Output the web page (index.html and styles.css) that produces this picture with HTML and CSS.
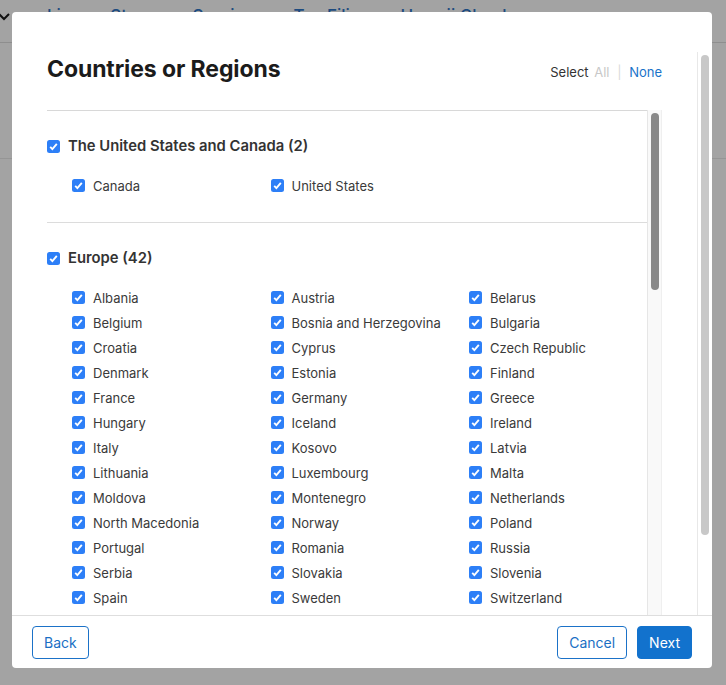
FILE: index.html
```html
<!DOCTYPE html>
<html lang="en">
<head>
<meta charset="utf-8">
<title>Countries or Regions</title>
<link rel="stylesheet" href="styles.css">
</head>
<body>
<div class="page">
  <div class="topbar">
    <svg class="chev" width="12" height="10" viewBox="0 0 12 10"><path d="M0 3 L5 8 L10 3" fill="none" stroke="#111" stroke-width="2"/></svg>
    <nav class="nav">
      <span>Live</span><span>Stores</span><span>Services</span><span>Tax Filing</span><span>Hawaii Check</span>
    </nav>
  </div>
  <div class="band"></div>
</div>

<div class="modal">
  <div class="modal-main">
    <div class="content">
      <div class="head">
        <h1 class="title">Countries or Regions</h1>
        <div class="select">Select <span class="all">All</span> <span class="sep">|</span> <a class="none">None</a></div>
      </div>
      <div class="listwrap">
        <div class="list">
          <section class="section">
            <div class="group"><svg class="cb" viewBox="0 0 13 13"><rect width="13" height="13" rx="2.5" fill="#2d7ff7"/><path d="M3.2 6.9 L5.4 9.1 L9.8 3.9" fill="none" stroke="#fff" stroke-width="1.9"/></svg>The United States and Canada (2)</div>
            <div class="items">
              <div class="item"><svg class="cb" viewBox="0 0 13 13"><rect width="13" height="13" rx="2.5" fill="#2d7ff7"/><path d="M3.2 6.9 L5.4 9.1 L9.8 3.9" fill="none" stroke="#fff" stroke-width="1.9"/></svg>Canada</div>
              <div class="item"><svg class="cb" viewBox="0 0 13 13"><rect width="13" height="13" rx="2.5" fill="#2d7ff7"/><path d="M3.2 6.9 L5.4 9.1 L9.8 3.9" fill="none" stroke="#fff" stroke-width="1.9"/></svg>United States</div>
            </div>
          </section>
          <section class="section">
            <div class="group"><svg class="cb" viewBox="0 0 13 13"><rect width="13" height="13" rx="2.5" fill="#2d7ff7"/><path d="M3.2 6.9 L5.4 9.1 L9.8 3.9" fill="none" stroke="#fff" stroke-width="1.9"/></svg>Europe (42)</div>
            <div class="items" id="europe"></div>
          </section>
        </div>
        <div class="track"><div class="thumb"></div></div>
      </div>
    </div>
    <div class="outer"><div class="outer-track"><div class="outer-thumb"></div></div></div>
  </div>
  <div class="footer">
    <button class="btn">Back</button>
    <div class="actions">
      <button class="btn">Cancel</button>
      <button class="btn primary">Next</button>
    </div>
  </div>
</div>
<script src="app.js"></script>
</body>
</html>
```
FILE: app.js
```js
const names = ["Albania","Austria","Belarus","Belgium","Bosnia and Herzegovina","Bulgaria","Croatia","Cyprus","Czech Republic","Denmark","Estonia","Finland","France","Germany","Greece","Hungary","Iceland","Ireland","Italy","Kosovo","Latvia","Lithuania","Luxembourg","Malta","Moldova","Montenegro","Netherlands","North Macedonia","Norway","Poland","Portugal","Romania","Russia","Serbia","Slovakia","Slovenia","Spain","Sweden","Switzerland"];
const box = '<svg class="cb" viewBox="0 0 13 13"><rect width="13" height="13" rx="2.5" fill="#2d7ff7"/><path d="M3.2 6.9 L5.4 9.1 L9.8 3.9" fill="none" stroke="#fff" stroke-width="1.9"/></svg>';
document.getElementById("europe").innerHTML = names.map(n => '<div class="item">' + box + n + '</div>').join("");
```
FILE: styles.css
```css
* { box-sizing: border-box; }
html, body { margin: 0; }
body {
  width: 726px;
  height: 685px;
  overflow: hidden;
  position: relative;
  background: #a3a3a3;
  font-family: Inter, "Liberation Sans", sans-serif;
}
.topbar {
  height: 43px;
  border-bottom: 1px solid #8e8e8e;
  display: flex;
  align-items: flex-start;
  padding-top: 6px;
}
.chev { margin-top: 5px; margin-left: -1px; }
.nav {
  display: flex;
  gap: 30px;
  margin-left: 36px;
  font-size: 17px;
  font-weight: 500;
  color: #1d4b7f;
}
.band {
  height: 116px;
  border-bottom: 1px solid #959595;
}
.modal {
  position: absolute;
  left: 12px;
  top: 12px;
  width: 700px;
  height: 656px;
  background: #fff;
  border-radius: 4px;
  display: flex;
  flex-direction: column;
  overflow: hidden;
}
.modal-main {
  flex: 1;
  display: flex;
  min-height: 0;
}
.content {
  flex: 1;
  min-width: 0;
  padding: 0 35px;
  display: flex;
  flex-direction: column;
}
.head {
  height: 98px;
  padding-top: 43px;
  display: flex;
  justify-content: space-between;
  align-items: flex-start;
}
.title {
  margin: 0;
  font-size: 23px;
  line-height: 28px;
  font-weight: 700;
  color: #1b1b1b;
  letter-spacing: -0.1px;
}
.select {
  margin-top: 7px;
  line-height: 20px;
  font-size: 13px;
  color: #333;
}
.select .all { color: #c8c8c8; margin-left: 2px; }
.select .sep { color: #dadada; margin: 0 4px; }
.select .none { color: #1a73c9; }
.listwrap {
  flex: 1;
  min-height: 0;
  display: flex;
}
.list {
  flex: 1;
  border-top: 1px solid #d8d8d8;
  overflow: hidden;
}
.track {
  width: 15px;
  background: #f9f9f9;
  border-left: 1px solid #e6e6e6;
  border-right: 1px solid #efefef;
  padding: 3px 2px 0 3px;
}
.thumb {
  height: 177px;
  background: #898989;
  border-radius: 4px;
}
.outer {
  width: 15px;
  padding-top: 40px;
  display: flex;
  flex-direction: column;
}
.outer-track {
  flex: 1;
  border-left: 1px solid #e8e8e8;
  padding: 3px 3px 0 3px;
}
.outer-thumb {
  height: 480px;
  background: #c8c8c8;
  border-radius: 4px;
}
.section {
  padding: 25px 0 24px;
  border-bottom: 1px solid #dcdcdc;
}
.group {
  height: 20px;
  display: flex;
  align-items: center;
  gap: 8px;
  font-size: 14.8px;
  font-weight: 600;
  color: #333;
}
.cb {
  width: 13px;
  height: 13px;
  flex-shrink: 0;
  display: block;
}
.items {
  margin-top: 17px;
  padding-left: 25px;
  display: grid;
  grid-template-columns: repeat(3, 198.5px);
  grid-auto-rows: 25px;
}
.item {
  display: flex;
  align-items: center;
  gap: 8px;
  font-size: 13px;
  color: #3a3a3a;
  white-space: nowrap;
}
.footer {
  height: 53px;
  border-top: 1px solid #dedede;
  padding: 10px 20px 0;
  display: flex;
  justify-content: space-between;
  align-items: flex-start;
}
.actions { display: flex; gap: 10px; }
.btn {
  height: 33px;
  padding: 0 11px;
  border: 1px solid #1b72c8;
  border-radius: 4px;
  background: #fff;
  color: #1a6fc4;
  font-family: Inter, "Liberation Sans", sans-serif;
  font-size: 14px;
  cursor: pointer;
}
.btn.primary {
  background: #1272cd;
  border-color: #1272cd;
  color: #fff;
}
```
